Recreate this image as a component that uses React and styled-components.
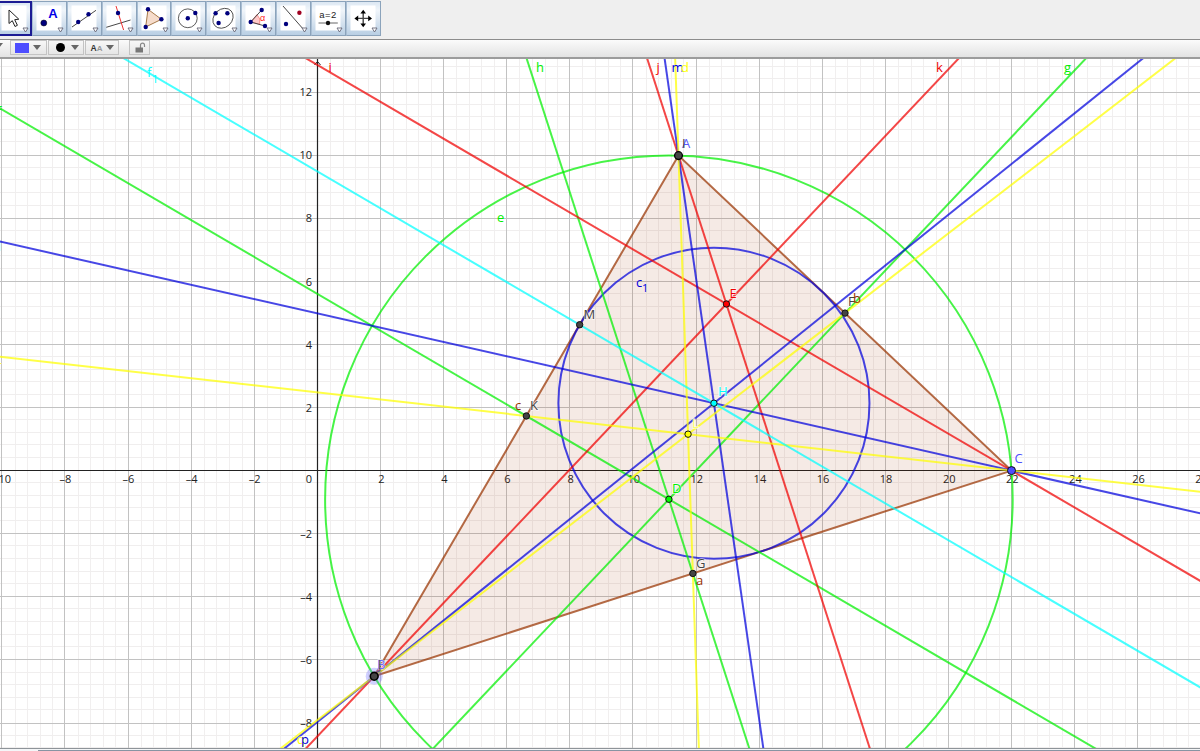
import React from "react";
import styled, { createGlobalStyle } from "styled-components";

const GlobalStyle = createGlobalStyle`
  * { box-sizing: border-box; }
  body {
    margin: 0;
    overflow: hidden;
    background: #eeeeee;
    font-family: "Open Sans", "Noto Sans", sans-serif;
  }
`
const Window = styled.div`
  display: flex;
  flex-direction: column;
  width: 1200px;
  height: 751px;
  overflow: hidden;
`
const Toolbar = styled.div`
  display: flex;
  flex: none;
  height: 39px;
  padding-top: 1px;
  margin-left: -3px;
  background: #efefef;
`
const ToolButton = styled.button`
  flex: none;
  width: 34.9px;
  height: 35px;
  padding: 0;
  border: ${(p) => (p.$active ? "2px solid #1c1c94" : "1px solid #8ba3bb")};
  border-left-color: ${(p) => (p.$active ? "#1c1c94" : "#a9bed3")};
  background: linear-gradient(#dce8f3, #f0f5fa 25%, #dbe6f1 55%, #b9cfe4);
  overflow: hidden;
`
const ToolIcon = styled.svg`
  display: block;
  width: 35px;
  height: 35px;
  margin: ${(p) => (p.$active ? "-2px" : "-1px")};
`
const StyleBar = styled.div`
  display: flex;
  flex: none;
  align-items: center;
  height: 20px;
  padding-bottom: 2px;
  border-top: 1px solid #8c8c8c;
  border-bottom: 2px solid #9c9c9c;
  background: linear-gradient(#fbfbfb, #e3e3e3);
`
const StyleButton = styled.button`
  display: flex;
  flex: none;
  align-items: center;
  justify-content: center;
  gap: ${(p) => p.$gap || 0}px;
  width: ${(p) => p.$width}px;
  height: 15px;
  margin-left: ${(p) => p.$left || 1}px;
  padding: ${(p) => p.$pad || "0"};
  border: 1px solid #c3c3c3;
  background: linear-gradient(#f7f7f7, #e6e6e6);
`
const Swatch = styled.span`
  width: 14px;
  height: 10px;
  background: #4d4dff;
`
const Dot = styled.span`
  width: 9px;
  height: 9px;
  border-radius: 50%;
  background: #000;
`
const Arrow = styled.span`
  border: 4px solid transparent;
  border-top: 5px solid #666;
  border-bottom: 0;
`
const EdgeArrow = styled(Arrow)`
  margin: 0 2px 4px -5px;
`
const Letters = styled.span`
  font: bold 8.5px "Liberation Sans", sans-serif;
  color: #333;
  small {
    font-size: 8px;
    color: #999;
  }
`
const Graph = styled.svg`
  display: block;
  flex: none;
  width: 1200px;
  height: 689px;
  background: #fff;
`
const AxisNumber = styled.text`
  font-size: 11px;
  fill: #222;
  text-anchor: ${(p) => p.$anchor};
`
const Label = styled.text`
  font-size: ${(p) => p.$size || 13}px;
  fill: ${(p) => p.$color};
  stroke: #fff;
  stroke-width: ${(p) => (p.$halo ? 1.5 : 0)}px;
  stroke-opacity: 0.7;
  paint-order: stroke;
`
const StatusEdge = styled.div`
  flex: none;
  height: 3px;
  border-top: 1px solid #8e9499;
  background: #f4f6f8;
  &::after {
    content: "";
    display: block;
    height: 1px;
    margin: 1px 0 0 38px;
    background: #8794a3;
  }
`

const NAVY = "#00007d"
const GREEN = "#00f000"
const RED = "#f00000"
const BLUE = "#0000dd"
const YELLOW = "#ffff00"
const CYAN = "#00ffff"
const BROWN = "#993300"

const P = ({ x, y, c = NAVY }) => <circle cx={x} cy={y} r="2.2" fill={c} />

const tools = [
  <path d="M12 9V22.5L15.3 19.7L18 25.5L20.4 24.3L17.7 18.7L21.8 18.2Z" fill="#fff" stroke="#222" strokeWidth="1" />,
  <>
    <circle cx="11.8" cy="22" r="3" fill={NAVY} stroke="#000" strokeWidth=".5" />
    <text x="21" y="17.4" textAnchor="middle" fontSize="13" fontWeight="bold" fill="#0000e6">A</text>
  </>,
  <>
    <path d="M5 26L29 9.3" stroke="#333" strokeWidth=".9" />
    <P x={11.2} y={21} /><P x={21.5} y={13.3} />
  </>,
  <>
    <path d="M4.3 26.3L28.5 19" stroke="#333" strokeWidth=".9" />
    <path d="M14 5L21.6 29" stroke="#e33" strokeWidth="1" />
    <P x={16} y={12} />
  </>,
  <>
    <path d="M11 8.3L24.4 18.3L8.7 26Z" fill="#f6dccb" stroke="#a67848" strokeWidth="1" />
    <P x={11} y={8.3} /><P x={24.4} y={18.3} /><P x={8.7} y={26} />
  </>,
  <>
    <circle cx="16.8" cy="17.3" r="9.4" fill="none" stroke="#333" strokeWidth=".8" />
    <P x={16.8} y={17.3} /><P x={24.3} y={12} />
  </>,
  <>
    <ellipse cx="17" cy="17.3" rx="11" ry="9" transform="rotate(-42 17 17.3)" fill="none" stroke="#333" strokeWidth=".8" />
    <P x={9.6} y={12.3} /><P x={21.4} y={12.3} /><P x={12.6} y={22} />
  </>,
  <>
    <path d="M9.7 21L16 13.5A10 10 0 0 1 18.7 23.3Z" fill="#ffc9c9" stroke="#e66" strokeWidth=".6" />
    <path d="M20.7 9L9.7 21L24 25" fill="none" stroke="#333" strokeWidth=".9" />
    <text x="19" y="20" fontSize="9" fill="#f22">α</text>
    <P x={20.7} y={9} /><P x={9.7} y={21} /><P x={24} y={25} />
  </>,
  <>
    <path d="M7 5L28 29" stroke="#333" strokeWidth=".9" />
    <P x={23.4} y={11.7} c="#a00020" /><P x={10} y={23} />
  </>,
  <>
    <text x="17" y="17" textAnchor="middle" fontSize="9.5" letterSpacing=".5" fill="#222" fontFamily="Liberation Sans, sans-serif">a=2</text>
    <path d="M7.5 22H26.8" stroke="#555" strokeWidth=".9" />
    <P x={17} y={22} c="#111" />
  </>,
  <>
    <path d="M17.2 11V24M10.5 17.4H24" stroke="#444" strokeWidth="1.4" />
    <path d="M17.2 8.7L20 12.5H14.4ZM17.2 26.2L20 22.4H14.4ZM8.4 17.4L12.2 14.6V20.2ZM26 17.4L22.2 14.6V20.2Z" fill="#000" />
  </>,
]

// vertices in graph pixels
const A = [678.5, 95.6]
const B = [374.2, 616.3]
const C = [1011.5, 410.6]
const unit = 31.55
const ox = 317.4
const oy = 410.6

const mid = (p, q) => [(p[0] + q[0]) / 2, (p[1] + q[1]) / 2]
const sub = (p, q) => [p[0] - q[0], p[1] - q[1]]
const perp = (v) => [-v[1], v[0]]
const dist = (p, q) => Math.hypot(p[0] - q[0], p[1] - q[1])

const D = circumcenter()
const E = [A[0] + B[0] + C[0] - 2 * D[0], A[1] + B[1] + C[1] - 2 * D[1]]
const L = [(A[0] + B[0] + C[0]) / 3, (A[1] + B[1] + C[1]) / 3]
const a = dist(B, C)
const b = dist(A, C)
const c = dist(A, B)
const H = [0, 1].map((i) => (a * A[i] + b * B[i] + c * C[i]) / (a + b + c))
const tA = (b + c - a) / 2 / c
const M = [A[0] + (B[0] - A[0]) * tA, A[1] + (B[1] - A[1]) * tA]
const K = mid(A, B)
const F = mid(A, C)
const G = mid(B, C)

function circumcenter() {
  const d = 2 * (A[0] * (B[1] - C[1]) + B[0] * (C[1] - A[1]) + C[0] * (A[1] - B[1]))
  const [sa, sb, sc] = [A, B, C].map((p) => p[0] * p[0] + p[1] * p[1])
  return [
    (sa * (B[1] - C[1]) + sb * (C[1] - A[1]) + sc * (A[1] - B[1])) / d,
    (sa * (C[0] - B[0]) + sb * (A[0] - C[0]) + sc * (B[0] - A[0])) / d,
  ]
}

function Line({ at, dir, color }) {
  const k = 2000 / Math.hypot(dir[0], dir[1])
  return (
    <line
      x1={at[0] - dir[0] * k} y1={at[1] - dir[1] * k}
      x2={at[0] + dir[0] * k} y2={at[1] + dir[1] * k}
      stroke={color} strokeWidth="2" strokeOpacity=".72"
    />
  )
}

function Grid() {
  const lines = []
  for (let i = -26; i <= 72; i++) {
    if (i % 5 === 0) continue
    const x = Math.round(ox + i * unit * 0.4) + 0.5
    lines.push(<path key={"x" + i} d={`M${x} -1V689`} stroke="#f1efef" />)
  }
  for (let i = -23; i <= 33; i++) {
    if (i % 5 === 0) continue
    const y = Math.round(oy - i * unit * 0.4) - 0.5
    lines.push(<path key={"y" + i} d={`M0 ${y}H1200`} stroke="#f0eeee" />)
  }
  for (let n = -10; n <= 26; n += 2) {
    const x = Math.floor(ox + n * unit) + 0.5
    lines.push(<path key={"mx" + n} d={`M${x} -1V689`} stroke="#c2c2c2" />)
  }
  for (let n = -8; n <= 12; n += 2) {
    const y = Math.floor(oy - n * unit) + 0.5
    lines.push(<path key={"my" + n} d={`M0 ${y}H1200`} stroke="#c2c2c2" />)
  }
  return <g>{lines}</g>
}

function Axes() {
  const xs = [-8, -6, -4, -2, 2, 4, 6, 8, 10, 12, 14, 16, 18, 20, 22, 24, 26, 28]
  const ys = [-8, -6, -4, -2, 2, 4, 6, 8, 10, 12]
  const text = (n) => String(n).replace("-", "–")
  return (
    <g>
      <path d="M0 410.5H1200M317.5 -1V689" stroke="#222" strokeWidth="1.2" />
      <path d="M314.5 5L317.5 1.5L320.5 5" stroke="#222" fill="none" />
      {xs.map((n) => (
        <AxisNumber key={n} $anchor="middle" x={ox + n * unit + (n < 0 ? 0.4 : 0.8)} y="423.4">{text(n)}</AxisNumber>
      ))}
      <AxisNumber $anchor="end" x="11" y="423.4">–10</AxisNumber>
      <AxisNumber $anchor="end" x="312" y="423.4">0</AxisNumber>
      {ys.map((n) => (
        <AxisNumber key={n} $anchor="end" x="312" y={oy - n * unit + 4.2}>{text(n)}</AxisNumber>
      ))}
    </g>
  )
}

const points = [
  [M, "#444"], [K, "#444"], [F, "#444"], [G, "#444"],
  [E, "#f00"], [D, "#0f0"], [L, "#ff0"], [H, "#0ff"],
]

const labels = [
  ["f", 147, 17, CYAN], ["i", 328.5, 12, RED], ["h", 536, 12, GREEN], ["j", 656.5, 12, RED],
  ["m", 671.5, 12, BLUE], ["d", 681, 12, YELLOW, true], ["k", 936, 12, RED], ["g", 1064, 12, GREEN],
  ["e", 497, 162, GREEN], ["c", 636, 226.5, BLUE],
  ["A", 682, 88, "#5a5aff"], ["I", 682, 88, "#444"],
  ["E", 729.5, 237.5, RED, true], ["F", 848, 246, "#444", true], ["b", 853, 243, BROWN],
  ["M", 583.5, 258.5, "#444", true], ["K", 530, 350, "#444", true], ["c", 515, 349.5, BROWN],
  ["H", 718, 336, CYAN, true], ["L", 692, 367.5, "#ffff70", true], ["D", 672, 432.5, GREEN, true],
  ["C", 1014.5, 402.5, "#4d4dff", true], ["G", 696, 507.5, "#444", true], ["a", 696, 525, BROWN],
  ["B", 377, 608.5, "#6a6aff", true], ["J", 378, 608.5, "#555"],
  ["q", 297, 684, YELLOW, true], ["p", 301, 684, BLUE],
  ["f", -3, 56, GREEN], ["l", -2.5, 191, BLUE], ["r", -4, 310, YELLOW],
]

function Drawing() {
  const unitTo = (p, q) => sub(q, p).map((v) => v / dist(p, q))
  const bisector = (p, q, r) => {
    const u = unitTo(p, q)
    const v = unitTo(p, r)
    return [u[0] + v[0], u[1] + v[1]]
  }
  return (
    <Graph viewBox="0 -1 1200 689">
      <Grid />
      <Axes />
      <path
        d={`M${A}L${B}L${C}Z`} fill={BROWN} fillOpacity=".1"
        stroke={BROWN} strokeWidth="2" strokeOpacity=".72"
      />
      <g fill="none" strokeWidth="2" strokeOpacity=".72">
        <circle cx={D[0]} cy={D[1]} r={dist(D, A)} stroke={GREEN} />
        <circle cx={H[0]} cy={H[1]} r={dist(H, M)} stroke={BLUE} />
      </g>
      <Line at={D} dir={perp(sub(B, A))} color={GREEN} />
      <Line at={D} dir={perp(sub(C, A))} color={GREEN} />
      <Line at={D} dir={perp(sub(C, B))} color={GREEN} />
      <Line at={C} dir={perp(sub(B, A))} color={RED} />
      <Line at={B} dir={perp(sub(C, A))} color={RED} />
      <Line at={A} dir={perp(sub(C, B))} color={RED} />
      <Line at={A} dir={bisector(A, B, C)} color={BLUE} />
      <Line at={B} dir={bisector(B, A, C)} color={BLUE} />
      <Line at={C} dir={bisector(C, A, B)} color={BLUE} />
      <Line at={A} dir={sub(L, A)} color={YELLOW} />
      <Line at={B} dir={sub(L, B)} color={YELLOW} />
      <Line at={C} dir={sub(L, C)} color={YELLOW} />
      <Line at={H} dir={sub(M, H)} color={CYAN} />
      {labels.map(([t, x, y, color, halo], i) => (
        <Label key={i} x={x} y={y} $color={color} $halo={halo}>{t}</Label>
      ))}
      <Label x="152" y="22.5" $color={CYAN} $size={11}>1</Label>
      <Label x="642" y="232" $color={BLUE} $size={11}>1</Label>
      <circle cx={B[0]} cy={B[1]} r="8.5" fill="#6464ff" fillOpacity=".3" />
      {points.map(([p, fill], i) => (
        <circle key={i} cx={p[0]} cy={p[1]} r="3.2" fill={fill} stroke="#111" strokeWidth="1" />
      ))}
      <circle cx={A[0]} cy={A[1]} r="3.9" fill="#444" stroke="#000" strokeWidth="1.3" />
      <circle cx={B[0]} cy={B[1]} r="3.9" fill="#444" stroke="#000" strokeWidth="1.6" />
      <circle cx={C[0]} cy={C[1]} r="4" fill="#4d4dff" stroke="#111" strokeWidth="1" />
    </Graph>
  )
}

export default function App() {
  return (
    <Window>
      <GlobalStyle />
      <Toolbar>
        {tools.map((icon, i) => (
          <ToolButton key={i} $active={i === 0}>
            <ToolIcon viewBox="0 0 35 35" $active={i === 0}>
              <rect x="4.5" y="4.5" width="25" height="25" fill="#fff" />
              {icon}
              <path d="M26 27H31L28.5 31Z" fill="#fff" stroke="#667" strokeWidth=".9" />
              {i === 0 && <rect x="1" y="1" width="33" height="33" fill="none" stroke="#1c1c94" strokeWidth="2" />}
            </ToolIcon>
          </ToolButton>
        ))}
      </Toolbar>
      <StyleBar>
        <EdgeArrow />
        <StyleButton $width={37} $left={5} $gap={4} $pad="0 2px 0 0"><Swatch /><Arrow /></StyleButton>
        <StyleButton $width={36} $gap={6} $pad="0 0 0 2px"><Dot /><Arrow /></StyleButton>
        <StyleButton $width={34} $gap={4} $pad="0 0 0 1px"><Letters>A<small>A</small></Letters><Arrow /></StyleButton>
        <StyleButton $width={21} $left={10}>
          <svg width="12" height="12" viewBox="0 0 12 12">
            <path d="M6.5 6V3.2A2 2 0 0 1 10.5 3.2V5" fill="none" stroke="#888" strokeWidth="1.2" />
            <rect x="1.5" y="5.5" width="7.5" height="5" fill="#777" />
          </svg>
        </StyleButton>
      </StyleBar>
      <Drawing />
      <StatusEdge />
    </Window>
  )
}
